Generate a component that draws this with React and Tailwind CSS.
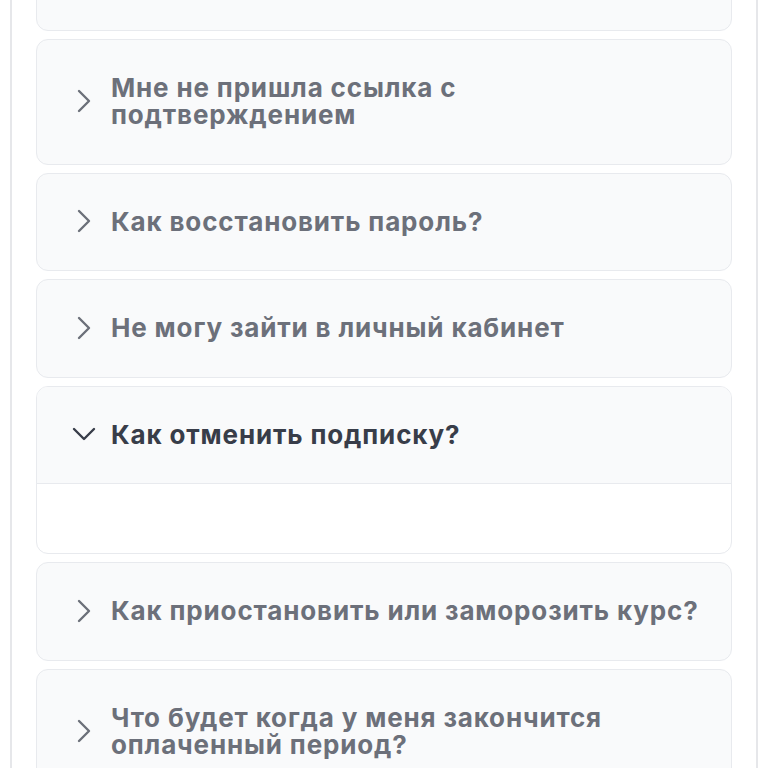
import { useState } from "react";

const faqs = [
  { q: "Как зарегистрироваться?", hidden: true },
  { q: "Мне не пришла ссылка с подтверждением" },
  { q: "Как восстановить пароль?" },
  { q: "Не могу зайти в личный кабинет" },
  { q: "Как отменить подписку?", open: true },
  { q: "Как приостановить или заморозить курс?" },
  { q: "Что будет когда у меня закончится оплаченный период?" },
];

function Chevron({ open }) {
  return (
    <svg
      width="24"
      height="24"
      viewBox="0 0 24 24"
      fill="none"
      stroke="currentColor"
      strokeWidth="2.4"
      strokeLinecap="round"
      strokeLinejoin="round"
      className={`shrink-0 ${open ? "rotate-90" : ""}`}
    >
      <polyline points="7,2 17,12 7,22" />
    </svg>
  );
}

export default function App() {
  const [openIdx, setOpenIdx] = useState(4);

  return (
    <div
      className="h-[768px] overflow-hidden bg-white"
      style={{ fontFamily: "Inter, 'Noto Sans', sans-serif" }}
    >
      <div className="mx-[10px] min-h-full border-x-2 border-[#e6e7ea] px-[24px]">
        <div className="-mt-[68px] flex flex-col gap-[8px]">
          {faqs.map((item, i) => {
            const open = openIdx === i;
            return (
              <div
                key={i}
                className={`overflow-hidden rounded-[12px] border border-[#e8eaee] ${
                  open ? "bg-white" : "bg-[#f9fafb]"
                }`}
              >
                <button
                  onClick={() => setOpenIdx(open ? -1 : i)}
                  className={`flex w-full items-center gap-[15px] pt-[34px] pb-[35px] pl-[35px] pr-[28px] text-left ${
                    open
                      ? "border-b border-[#e8eaee] bg-[#f9fafb] text-[#383d49]"
                      : "text-[#6c707a]"
                  } ${item.hidden ? "invisible" : ""}`}
                >
                  <Chevron open={open} />
                  <span className="text-[26px] font-bold leading-[27.5px] tracking-[0.85px]">
                    {item.q}
                  </span>
                </button>
                {open && <div className="h-[69px]" />}
              </div>
            );
          })}
        </div>
      </div>
    </div>
  );
}
